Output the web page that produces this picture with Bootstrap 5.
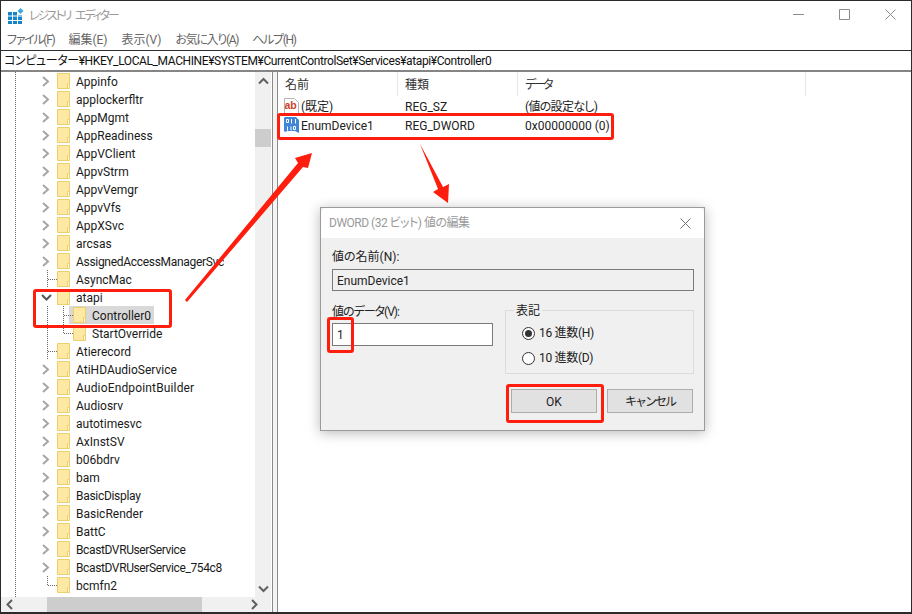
<!DOCTYPE html>
<html lang="ja">
<head>
<meta charset="utf-8">
<title>レジストリ エディター</title>
<link href="https://cdn.jsdelivr.net/npm/bootstrap@5.3.0/dist/css/bootstrap.min.css" rel="stylesheet">
<style>
html,body{margin:0;height:100%;overflow:hidden;background:#fff}
body{font:12px/18px Roboto,"Noto Sans CJK JP","Liberation Sans",sans-serif;color:#1a1a1a;font-feature-settings:"palt"}
.app-win{position:relative;width:912px;height:614px;border:solid #2b2b2b;border-width:1px 1px 2px 1px;overflow:hidden;background:#fff}
.title-row{height:27px;padding-left:7px;color:#9a9a9a;margin-right:-2px}
.title-ico{margin-top:2px}
.title-row .title-text{margin-left:5px;padding-top:2px;font-size:12px;letter-spacing:-2.2px;word-spacing:4px}
.win-btn{width:46px;height:27px;margin-left:0}
.menu-row{height:22px;color:#666;padding-left:6px}
.menu-row span{margin-right:14px;padding-top:2px}
.menu-row span.kana{letter-spacing:-1.3px}
.addr-row{height:22px;border-top:1px solid #2e2e2e;border-bottom:2px solid #858585;padding-left:3px;line-height:21px;color:#111;white-space:nowrap;letter-spacing:-.4px}
.pane-row{height:540px}
.left-col{width:271px}
.tree-wrap{height:525px}
.tree-area{width:254px;height:525px;overflow:hidden;background-image:repeating-linear-gradient(to bottom,#666 0 1px,transparent 1px 2px);background-size:1px 100%;background-position:14px 0;background-repeat:no-repeat}
.tree-list{margin:0;padding:0;list-style:none}
.tree-list li{height:18px;display:flex;align-items:flex-start;line-height:20px;white-space:nowrap;color:#1a1a1a}
.tree-list li.tight{letter-spacing:-.3px}
.tree-list li.tighter{letter-spacing:-.38px}
.tree-list li.loose{letter-spacing:.15px}
.twist{width:56px;height:18px;flex:none;display:block;position:relative}
.kid .twist{width:72px}
.t-ico{position:absolute;left:40px;top:4px}
.d1,.d2,.dh1,.dh2{position:absolute;display:block}
.d1{left:46px;top:0;height:18px;width:1px;background:repeating-linear-gradient(to bottom,#666 0 1px,transparent 1px 2px)}
.d1.half{height:10px}
.dh1{left:47px;top:9px;width:9px;height:1px;background:repeating-linear-gradient(to right,#666 0 1px,transparent 1px 2px)}
.d2{left:62px;top:0;height:18px;width:1px;background:repeating-linear-gradient(to bottom,#666 0 1px,transparent 1px 2px)}
.d2.half{height:10px}
.dh2{left:63px;top:9px;width:9px;height:1px;background:repeating-linear-gradient(to right,#666 0 1px,transparent 1px 2px)}
.fold{width:13px;height:16px;flex:none;margin-right:6px;align-self:center}
.sel-item{background:#d9d9d9;display:flex;align-items:flex-start;height:18px;margin-left:-4px;width:85px;padding:0 0 0 4px}
.v-bar{width:16px;background:#f0f0f0;height:525px}
.v-bar .v-top{height:17px;margin-top:0}
.v-thumb{width:16px;height:18px;background:#cdcdcd;margin-top:40px}
.v-spacer{flex:1}
.h-bar{height:15px;background:#f0f0f0;width:270px}
.h-thumb{width:155px;height:15px;background:#cdcdcd;margin-left:26px}
.split{width:6px;height:540px;border-left:1px solid #8a8a8a;border-right:1px solid #8a8a8a;background:#f4f4f4;flex:none}
.right-col{flex:1;padding-left:0}
.list-head{height:24px;color:#333}
.c1{width:120px;padding-left:7px;flex:none;white-space:nowrap}
.c2{width:120px;padding-left:7px;flex:none;white-space:nowrap}
.c3{width:288px;padding-left:7px;flex:none;white-space:nowrap}
.list-head>div{height:24px;line-height:26px;border-right:1px solid #e5e5e5}
.list-head .c3{letter-spacing:-2.5px}
.reg-row{height:19px;color:#222;line-height:22px}
.reg-row .c1{padding-left:6px;display:flex;align-items:flex-start}
.reg-row .c3.jp{letter-spacing:-.7px}
.reg-ico{flex:none;margin-right:2px;align-self:center}
.dlg{position:absolute;left:319px;top:206px;width:385px;height:224px;border:1px solid #9b9b9b;border-radius:0;background:#f0f0f0;box-shadow:0 2px 12px rgba(0,0,0,.28)}
.dlg-title{height:30px;background:#fff;border:0;border-radius:0;padding:0 0 0 8px;color:#9a9a9a;font-size:12px}
.dlg-title span{letter-spacing:-.5px}
.dlg-x{margin-right:13px}
.dlg-body{padding:9px 10px 0 11px;color:#222}
.lab{height:18px;line-height:20px}
.lab.kana{letter-spacing:-1px}
.ro-box{height:22px;border:1px solid #7a7a7a;background:#f0f0f0;margin:4px 0 11px;padding:0 4px;line-height:22px;color:#222}
.data-col{width:161px}
.data-box{height:23px;border:1px solid #7a7a7a;background:#fff;margin-top:3px;padding:0 4px;line-height:23px}
.base-set{width:189px;height:73px;margin:0 0 0 12px;padding:0;border:1px solid #dcdcdc;min-width:0;margin-top:-1px}
.base-set legend{float:none;width:auto;height:18px;font-size:12px;line-height:20px;margin:0 0 0 8px;padding:0 2px;color:#222}
.radio-col{padding:5px 0 0 16px;gap:7px}
.radio-line{height:18px;line-height:18px;align-items:flex-start;letter-spacing:-.3px}
.ring{width:13px;height:13px;border:1px solid #333;border-radius:50%;background:#fff;margin-right:4px;flex:none;display:flex;align-items:center;justify-content:center;align-self:center}
.ring i{display:block;width:7px;height:7px;border-radius:50%;background:#333}
.btn-row{margin-top:15px;gap:10px;padding-left:179px}
.btn.win-push{width:86px;height:24px;padding:2px 0 0;background:#e1e1e1;border:1px solid #adadad;border-radius:0;color:#222;font-size:12px;line-height:20px}
.btn.win-push.kana{letter-spacing:-2px}
.red-box{position:absolute;border:3px solid #ff1d0d;border-radius:3px}
.rb-list{left:276px;top:112px;width:337px;height:27px}
.rb-tree{left:32px;top:288px;width:139px;height:39px}
.rb-one{left:326px;top:316px;width:27px;height:36px}
.rb-ok{left:505px;top:383px;width:98px;height:39px}
.arrows{position:absolute;left:-1px;top:-1px;width:912px;height:614px;pointer-events:none}
</style>
</head>
<body>
<svg width="0" height="0" class="position-absolute">
<defs>
<symbol id="fd" viewBox="0 0 13 16"><path d="M.5.5h12v15H.5z" fill="#fde9a4" stroke="#efcf6c"/><path d="M10.5 15.5v-5h2v5z" fill="#fff8dc" stroke="#efcf6c"/></symbol>
<symbol id="cr" viewBox="0 0 10 11"><path d="M2 1l5 4.500-5 4.500" fill="none" stroke="#a6a6a6" stroke-width="2"/></symbol>
</defs>
</svg>
<div class="app-win d-flex flex-column">
  <div class="title-row d-flex align-items-center">
    <svg width="16" height="16" viewBox="0 0 16 16" class="title-ico flex-none"><g fill="#1583c9"><path d="M0 4h4v3.500H0zM5 4h4v3.500H5zM10 7h4v.500h-4zM0 8.500h4V12H0zM5 8.500h4V12H5zM10 8.500h4V12h-4zM0 13h4v3H0zM5 13h4v3H5zM10 13h4v3h-4z"/></g><path d="M12.500 0l3 3-3 3-3-3z" fill="#39a9e0"/></svg>
    <span class="title-text flex-grow-1">レジストリ エディター</span>
    <div class="win-btn d-flex align-items-center justify-content-center"><svg width="11" height="11" viewBox="0 0 11 11"><path d="M0 5.500h11" stroke="#8c8c8c"/></svg></div>
    <div class="win-btn d-flex align-items-center justify-content-center"><svg width="11" height="11" viewBox="0 0 11 11"><path d="M.5.5h10v10H.5z" fill="none" stroke="#8c8c8c"/></svg></div>
    <div class="win-btn d-flex align-items-center justify-content-center"><svg width="11" height="11" viewBox="0 0 11 11"><path d="M.5.500l10 10M10.500.500l-10 10" stroke="#8c8c8c"/></svg></div>
  </div>
  <div class="menu-row d-flex align-items-center"><span class="kana">ファイル(F)</span><span>編集(E)</span><span>表示(V)</span><span class="kana">お気に入り(A)</span><span class="kana">ヘルプ(H)</span></div>
  <div class="addr-row">コンピューター¥HKEY_LOCAL_MACHINE¥SYSTEM¥CurrentControlSet¥Services¥atapi¥Controller0</div>
  <div class="pane-row d-flex">
    <div class="left-col">
      <div class="tree-wrap d-flex">
        <div class="tree-area">
          <ul class="tree-list">
            <li><span class="twist"><svg class="t-ico" width="10" height="11"><use href="#cr"/></svg></span><svg class="fold"><use href="#fd"/></svg>Appinfo</li>
            <li><span class="twist"><svg class="t-ico" width="10" height="11"><use href="#cr"/></svg></span><svg class="fold"><use href="#fd"/></svg>applockerfltr</li>
            <li><span class="twist"><svg class="t-ico" width="10" height="11"><use href="#cr"/></svg></span><svg class="fold"><use href="#fd"/></svg>AppMgmt</li>
            <li><span class="twist"><svg class="t-ico" width="10" height="11"><use href="#cr"/></svg></span><svg class="fold"><use href="#fd"/></svg>AppReadiness</li>
            <li><span class="twist"><svg class="t-ico" width="10" height="11"><use href="#cr"/></svg></span><svg class="fold"><use href="#fd"/></svg>AppVClient</li>
            <li><span class="twist"><svg class="t-ico" width="10" height="11"><use href="#cr"/></svg></span><svg class="fold"><use href="#fd"/></svg>AppvStrm</li>
            <li><span class="twist"><svg class="t-ico" width="10" height="11"><use href="#cr"/></svg></span><svg class="fold"><use href="#fd"/></svg>AppvVemgr</li>
            <li><span class="twist"><svg class="t-ico" width="10" height="11"><use href="#cr"/></svg></span><svg class="fold"><use href="#fd"/></svg>AppvVfs</li>
            <li><span class="twist"><svg class="t-ico" width="10" height="11"><use href="#cr"/></svg></span><svg class="fold"><use href="#fd"/></svg>AppXSvc</li>
            <li><span class="twist"><svg class="t-ico" width="10" height="11"><use href="#cr"/></svg></span><svg class="fold"><use href="#fd"/></svg>arcsas</li>
            <li class="tight"><span class="twist"><svg class="t-ico" width="10" height="11"><use href="#cr"/></svg></span><svg class="fold"><use href="#fd"/></svg>AssignedAccessManagerSvc</li>
            <li><span class="twist"><i class="d1"></i><i class="dh1"></i></span><svg class="fold"><use href="#fd"/></svg>AsyncMac</li>
            <li><span class="twist"><svg class="t-ico" width="11" height="11" viewBox="0 0 11 11"><path d="M1 3l4.500 4.500L10 3" fill="none" stroke="#555" stroke-width="2"/></svg></span><svg class="fold"><use href="#fd"/></svg>atapi</li>
            <li class="kid"><span class="twist"><i class="d1"></i><i class="d2"></i><i class="dh2"></i></span><span class="sel-item"><svg class="fold"><use href="#fd"/></svg>Controller0</span></li>
            <li class="kid"><span class="twist"><i class="d1"></i><i class="d2 half"></i><i class="dh2"></i></span><svg class="fold"><use href="#fd"/></svg>StartOverride</li>
            <li><span class="twist"><i class="d1"></i><i class="dh1"></i></span><svg class="fold"><use href="#fd"/></svg>Atierecord</li>
            <li><span class="twist"><svg class="t-ico" width="10" height="11"><use href="#cr"/></svg></span><svg class="fold"><use href="#fd"/></svg>AtiHDAudioService</li>
            <li class="loose"><span class="twist"><svg class="t-ico" width="10" height="11"><use href="#cr"/></svg></span><svg class="fold"><use href="#fd"/></svg>AudioEndpointBuilder</li>
            <li><span class="twist"><svg class="t-ico" width="10" height="11"><use href="#cr"/></svg></span><svg class="fold"><use href="#fd"/></svg>Audiosrv</li>
            <li><span class="twist"><svg class="t-ico" width="10" height="11"><use href="#cr"/></svg></span><svg class="fold"><use href="#fd"/></svg>autotimesvc</li>
            <li><span class="twist"><svg class="t-ico" width="10" height="11"><use href="#cr"/></svg></span><svg class="fold"><use href="#fd"/></svg>AxInstSV</li>
            <li><span class="twist"><svg class="t-ico" width="10" height="11"><use href="#cr"/></svg></span><svg class="fold"><use href="#fd"/></svg>b06bdrv</li>
            <li><span class="twist"><svg class="t-ico" width="10" height="11"><use href="#cr"/></svg></span><svg class="fold"><use href="#fd"/></svg>bam</li>
            <li class="tight"><span class="twist"><svg class="t-ico" width="10" height="11"><use href="#cr"/></svg></span><svg class="fold"><use href="#fd"/></svg>BasicDisplay</li>
            <li><span class="twist"><svg class="t-ico" width="10" height="11"><use href="#cr"/></svg></span><svg class="fold"><use href="#fd"/></svg>BasicRender</li>
            <li><span class="twist"><svg class="t-ico" width="10" height="11"><use href="#cr"/></svg></span><svg class="fold"><use href="#fd"/></svg>BattC</li>
            <li class="tighter"><span class="twist"><svg class="t-ico" width="10" height="11"><use href="#cr"/></svg></span><svg class="fold"><use href="#fd"/></svg>BcastDVRUserService</li>
            <li class="tighter"><span class="twist"><svg class="t-ico" width="10" height="11"><use href="#cr"/></svg></span><svg class="fold"><use href="#fd"/></svg>BcastDVRUserService_754c8</li>
            <li><span class="twist"><i class="d1 half"></i><i class="dh1"></i></span><svg class="fold"><use href="#fd"/></svg>bcmfn2</li>
          </ul>
        </div>
        <div class="v-bar d-flex flex-column align-items-center">
          <div class="v-top d-flex align-items-center"><svg width="11" height="8" viewBox="0 0 11 8"><path d="M1 6.500l4.500-4.500 4.500 4.500" fill="none" stroke="#606060" stroke-width="2"/></svg></div>
          <div class="v-thumb"></div>
          <div class="v-spacer"></div>
          <div class="v-top d-flex align-items-center"><svg width="11" height="8" viewBox="0 0 11 8"><path d="M1 1.500l4.500 4.500 4.500-4.500" fill="none" stroke="#606060" stroke-width="2"/></svg></div>
        </div>
      </div>
      <div class="h-bar d-flex align-items-center">
        <svg width="20" height="11" viewBox="0 0 20 11"><path d="M11 1L6.500 5.500 11 10" fill="none" stroke="#606060" stroke-width="2"/></svg>
        <div class="h-thumb"></div>
        <div class="flex-grow-1"></div>
        <svg width="24" height="11" viewBox="0 0 24 11"><path d="M5 1l4.500 4.500L5 10" fill="none" stroke="#606060" stroke-width="2"/></svg>
      </div>
    </div>
    <div class="split"></div>
    <div class="right-col">
      <div class="list-head d-flex"><div class="c1">名前</div><div class="c2">種類</div><div class="c3">データ</div></div>
      <div class="reg-row d-flex">
        <div class="c1"><svg class="reg-ico" width="15" height="16" viewBox="0 0 15 16"><path d="M.5.5h10l4 4v11H.5z" fill="#fff" stroke="#b5b5b5"/><text x="0.500" y="11" font-size="10.500" font-weight="700" font-family="Liberation Sans" fill="#d0401f">ab</text></svg>(既定)</div>
        <div class="c2">REG_SZ</div><div class="c3 jp">(値の設定なし)</div>
      </div>
      <div class="reg-row d-flex">
        <div class="c1"><svg class="reg-ico" width="15" height="16" viewBox="0 0 15 16"><path d="M1 0h11l3 3v13l-4-2H3l-2 1-1-1V1z" fill="#3f86d8"/><g fill="none" stroke="#fff"><path d="M2.500 2.500h2v3h-2zM7.500 2v4.500M11.500 2v4.500M7 9.500v4M3.500 9.500v4M9.500 9.500h2v3h-2z"/></g></svg>EnumDevice1</div>
        <div class="c2">REG_DWORD</div><div class="c3">0x00000000 (0)</div>
      </div>
    </div>
  </div>

  <div class="dlg card">
    <div class="dlg-title card-header d-flex align-items-center justify-content-between">
      <span>DWORD (32 ビット) 値の編集</span>
      <svg class="dlg-x" width="11" height="11" viewBox="0 0 11 11"><path d="M.5.500l10 10M10.500.500l-10 10" stroke="#6e6e6e"/></svg>
    </div>
    <div class="dlg-body card-body">
      <div class="lab">値の名前(N):</div>
      <div class="ro-box">EnumDevice1</div>
      <div class="d-flex">
        <div class="data-col">
          <div class="lab kana">値のデータ(V):</div>
          <div class="data-box">1</div>
        </div>
        <fieldset class="base-set">
          <legend>表記</legend>
          <div class="radio-col d-flex flex-column">
            <div class="radio-line d-flex"><span class="ring"><i></i></span>16 進数(H)</div>
            <div class="radio-line d-flex"><span class="ring"></span>10 進数(D)</div>
          </div>
        </fieldset>
      </div>
      <div class="btn-row d-flex">
        <button type="button" class="btn win-push">OK</button>
        <button type="button" class="btn win-push kana">キャンセル</button>
      </div>
    </div>
  </div>

  <div class="red-box rb-list"></div>
  <div class="red-box rb-tree"></div>
  <div class="red-box rb-one"></div>
  <div class="red-box rb-ok"></div>
  <svg class="arrows" viewBox="0 0 912 614">
    <path d="M185 300L298 163 295 158 312 153 308 168 303 167 187 302Z" fill="#ff1d0d"/>
    <path d="M420 144L443 187 449 184 448 203 433 192 438 189Z" fill="#ff1d0d"/>
  </svg>
</div>
</body>
</html>
